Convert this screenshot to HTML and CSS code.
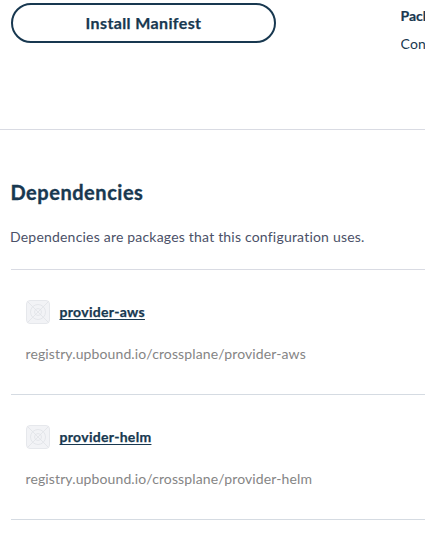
FILE: index.html
```
<!DOCTYPE html>
<html lang="en">
<head>
<meta charset="utf-8">
<title>Dependencies</title>
<link rel="stylesheet" href="styles.css">
</head>
<body>
<svg class="defs" width="0" height="0" aria-hidden="true">
  <symbol id="package" viewBox="0 0 24 24">
    <rect x=".5" y=".5" width="23" height="23" rx="3.5" fill="#f2f3f6" stroke="#e6e8ec"/>
    <g fill="none" stroke="#e0e2e7" stroke-width=".8">
      <path d="M1.5 1.5l21 21M22.5 1.5l-21 21"/>
      <circle cx="12" cy="12" r="7.5"/>
      <circle cx="12" cy="12" r="3.5"/>
    </g>
  </symbol>
</svg>
<header class="summary">
  <button class="install">Install Manifest</button>
  <div class="meta">
    <div class="meta-label">Package</div>
    <div class="meta-value">Configuration</div>
  </div>
</header>
<main class="deps">
  <h2>Dependencies</h2>
  <p class="intro">Dependencies are packages that this configuration uses.</p>
  <ul class="list">
    <li>
      <div class="name"><svg width="24" height="24"><use href="#package"/></svg><a>provider-aws</a></div>
      <div class="path">registry.upbound.io/crossplane/provider-aws</div>
    </li>
    <li>
      <div class="name"><svg width="24" height="24"><use href="#package"/></svg><a>provider-helm</a></div>
      <div class="path">registry.upbound.io/crossplane/provider-helm</div>
    </li>
  </ul>
</main>
</body>
</html>
```
FILE: styles.css
```
* { box-sizing: border-box; }
body {
  margin: 0;
  height: 544px;
  overflow: hidden;
  background: #fff;
  color: #183850;
  font-family: Lato, "Liberation Sans", sans-serif;
  font-size: 14px;
  font-variant-ligatures: none;
}
.defs { display: none; }
.summary {
  display: flex;
  height: 130px;
  padding: 3px 0 0 11px;
  border-bottom: 1px solid #d9dbe3;
  overflow: hidden;
}
.install {
  flex: none;
  width: 265px;
  height: 40px;
  padding: 0;
  border: 2px solid #183850;
  border-radius: 20px;
  background: #fff;
  color: inherit;
  font: bold 16px/36px Lato, sans-serif;
  letter-spacing: .38px;
  -webkit-text-stroke: .25px;
}
.meta {
  flex: 1;
  min-width: 0;
  overflow: hidden;
  margin: -1px 0 0 124.5px;
  line-height: 28px;
  white-space: nowrap;
}
.meta-label {
  font-weight: bold;
  -webkit-text-stroke: .2px;
}
.meta-value { letter-spacing: .2px; }
.deps { padding: 48px 0 0 11px; }
h2 {
  margin: 0 0 0 -.5px;
  font-size: 20px;
  line-height: 28px;
  letter-spacing: .53px;
  -webkit-text-stroke: .35px;
}
.intro {
  margin: 21px 0 0 -1px;
  line-height: 20px;
  padding-bottom: 22px;
  color: #4b5168;
  letter-spacing: .2px;
  white-space: nowrap;
}
.list {
  margin: 0;
  padding: 0;
  list-style: none;
  border-top: 1px solid #d9dbe3;
}
.list li {
  height: 125px;
  padding: 30px 0 0 15px;
  border-bottom: 1px solid #d5dbe2;
}
.name {
  display: flex;
  align-items: center;
  gap: 9.5px;
  height: 24px;
}
.name a {
  font-weight: bold;
  line-height: 20px;
  letter-spacing: .3px;
  text-decoration: underline;
  text-decoration-thickness: 1px;
  text-underline-offset: 2px;
  -webkit-text-stroke: .25px;
}
.path {
  margin: 20px 0 0 -.5px;
  line-height: 20px;
  color: #858585;
  letter-spacing: .12px;
}
```
